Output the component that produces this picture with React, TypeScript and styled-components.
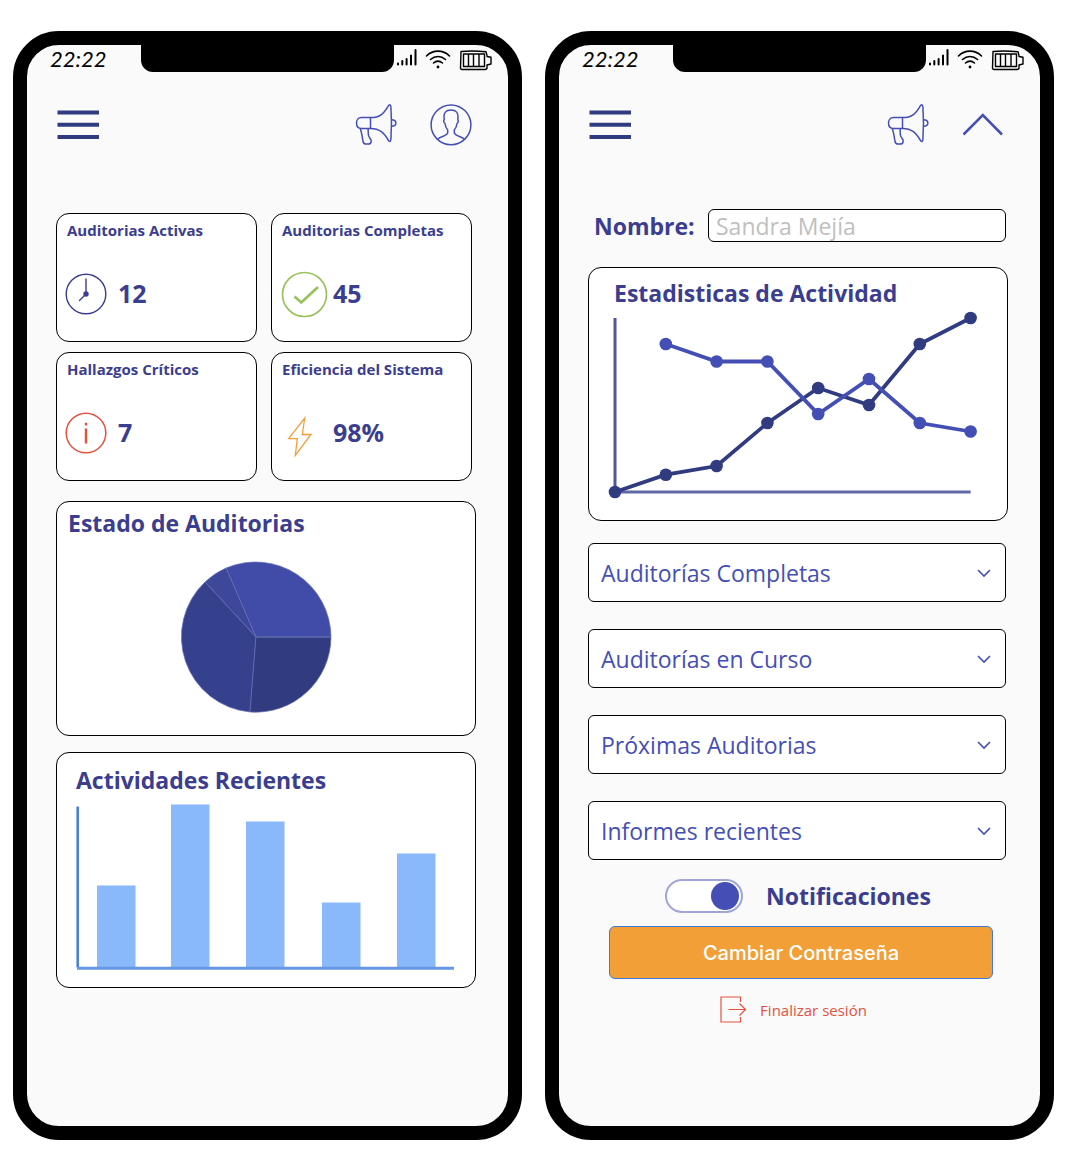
import React, { useState } from "react";
import styled, { createGlobalStyle } from "styled-components";

const color = {
  ink: "#3b3d8f",
  navy: "#313b80",
  indigo: "#444fb5",
  red: "#e25241",
  green: "#97c35c",
  orange: "#f29f38",
  screen: "#fafafa",
};

const GlobalStyle = createGlobalStyle`
  *, *::before, *::after { box-sizing: border-box; }
  body {
    margin: 0;
    background: #fff;
    font-family: "Open Sans", "Noto Sans", sans-serif;
    color: ${color.ink};
    -webkit-font-smoothing: antialiased;
  }
  svg { display: block; overflow: visible; }
`;

const Page = styled.main`
  display: grid;
  grid-template-columns: 1fr 1fr;
  gap: 23px;
  padding: 31px 18px 28px 13px;
`;

const Phone = styled.section`
  display: flex;
  flex-direction: column;
  border: 14px solid #000;
  border-radius: 46px;
  background: ${color.screen};
  padding-bottom: 103px;
`;

const StatusBar = styled.div`
  display: grid;
  grid-template-columns: 1fr 253px 1fr;
  height: 26px;
  color: #000;
`;

const Clock = styled.time`
  padding: 4px 0 0 23px;
  font: italic 400 22px/20px Lato, sans-serif;
`;

const Notch = styled.div`
  background: #000;
  border-radius: 0 0 12px 12px;
`;

const Signals = styled.div`
  display: flex;
  align-items: flex-start;
  gap: 8px;
  padding: 3px 0 0 2px;
`;

const Header = styled.header`
  display: flex;
  align-items: center;
  justify-content: space-between;
  padding: 33px 36px 0 30px;
`;

const HeaderActions = styled.div`
  display: flex;
  gap: 33px;
`;

const IconButton = styled.button`
  display: block;
  width: 42px;
  height: 42px;
  padding: 0;
  border: 0;
  background: none;
  cursor: pointer;
`;

const Content = styled.div`
  display: flex;
  flex-direction: column;
  padding: 0 32px 0 29px;
`;

const Stats = styled.div`
  display: grid;
  grid-template-columns: 1fr 1fr;
  gap: 10px 14px;
  margin: 67px 4px 20px 0;
`;

const Card = styled.article`
  border: 1px solid #000;
  border-radius: 13px;
  background: #fff;
`;

const StatCard = styled(Card)`
  height: 129px;
  padding: 6px 8px 0;
`;

const StatTitle = styled.h2`
  margin: 0 0 30px;
  padding-left: 2px;
  font-size: 15px;
  line-height: 20px;
  white-space: nowrap;
`;

const StatRow = styled.div`
  display: flex;
  align-items: center;
  height: 48px;
`;

const StatIcon = styled.span`
  flex: 0 0 53px;
`;

const StatValue = styled.strong`
  font-size: 25px;
  line-height: 32px;
  padding-bottom: 2px;
`;

const ChartTitle = styled.h2`
  margin: 0;
  font-size: 23px;
  line-height: 32px;
`;

const PieCard = styled(Card)`
  padding: 5px 11px 22px;
  margin-bottom: 16px;
`;

const PieHolder = styled.div`
  padding: 22px 0 0 112px;
`;

const BarCard = styled(Card)`
  padding: 11px 19px 16px;
`;

const BarHolder = styled.div`
  padding-top: 8px;
`;

const LineCard = styled(Card)`
  padding: 9px 25px 21px;
  margin: 25px 0 22px;
`;

const LineHolder = styled.div`
  padding-top: 2px;
`;

const NameRow = styled.div`
  display: grid;
  grid-template-columns: 114px 1fr;
  align-items: center;
  padding: 0 2px 0 6px;
  margin-top: 63px;
`;

const Label = styled.label`
  font-size: 23px;
  line-height: 32px;
  font-weight: 700;
`;

const TextInput = styled.input`
  width: 100%;
  height: 33px;
  padding: 0 7px;
  border: 1px solid #000;
  border-radius: 6px;
  background: #fff;
  font: 400 23px/30px "Open Sans", "Noto Sans", sans-serif;
  color: ${color.ink};
  &::placeholder { color: #bfbfbf; opacity: 1; }
`;

const SelectList = styled.div`
  display: grid;
  gap: 27px;
  padding-right: 2px;
`;

const SelectBox = styled.div`
  display: grid;
  align-items: center;
  > * { grid-area: 1 / 1; }
  > svg { justify-self: end; margin-right: 15px; pointer-events: none; }
`;

const Select = styled.select`
  appearance: none;
  width: 100%;
  height: 59px;
  padding: 0 40px 0 12px;
  border: 1px solid #000;
  border-radius: 6px;
  background: #fff;
  font: 400 23px/32px "Open Sans", "Noto Sans", sans-serif;
  color: ${color.indigo};
`;

const ToggleRow = styled.div`
  display: flex;
  align-items: center;
  justify-content: center;
  gap: 23px;
  margin: 19px 0 13px;
`;

const Toggle = styled.input`
  appearance: none;
  display: flex;
  align-items: center;
  justify-content: ${(p) => (p.checked ? "flex-end" : "flex-start")};
  width: 78px;
  height: 34px;
  margin: 0;
  padding: 0 2px;
  border: 2px solid #a0a5d8;
  border-radius: 17px;
  background: #fff;
  &::before {
    content: "";
    width: 28px;
    height: 28px;
    border-radius: 50%;
    background: ${color.indigo};
  }
`;

const PrimaryButton = styled.button`
  height: 53px;
  margin: 0 15px 0 21px;
  border: 1px solid #3e78d8;
  border-radius: 6px;
  background: ${color.orange};
  color: #fff;
  font: 500 20px/28px Inter, sans-serif;
  cursor: pointer;
`;

const LogoutLink = styled.a`
  display: flex;
  align-items: center;
  align-self: center;
  gap: 13px;
  margin: 17px 9px 0 0;
  font-size: 15px;
  line-height: 20px;
  color: ${color.red};
  text-decoration: none;
`;

function Status() {
  return (
    <StatusBar>
      <Clock>22:22</Clock>
      <Notch />
      <Signals>
        <svg width="21" height="19" viewBox="0 0 21 19" stroke="#000" strokeWidth="2" strokeLinecap="round">
          <path d="M2 15.5v1M6.3 13v3.500M10.600 11v5.500M15 7.500v9M19.500 2v14.500" />
        </svg>
        <svg width="26" height="21" viewBox="0 0 26 21" fill="none" stroke="#000" strokeWidth="1.600" strokeLinecap="round">
          <path d="M1.500 8C8 1.500 18 1.500 24.500 8M5.500 11.500C10 7.500 16 7.500 20.500 11.500M8.500 15C11.500 12.500 14.500 12.500 17.500 15" />
          <circle cx="13" cy="19" r="1.400" fill="#000" stroke="none" />
        </svg>
        <svg width="33" height="24" viewBox="0 0 33 24" fill="none" stroke="#000" strokeWidth="1.400" strokeLinejoin="round">
          <path d="M2 3.500Q14 2.500 27 3.800L28 7.500V8.500L32 9.300V16L28 17V20.500Q27 21.500 26 21.500H3Q1.500 21.500 1.500 20ZM4.500 6H25.500V18.500H4.500ZM9.500 6V18.500M14.500 6V18.500M20 6V18.500" />
        </svg>
      </Signals>
    </StatusBar>
  );
}

function MenuIcon() {
  return (
    <svg width="42" height="42" viewBox="0 0 42 42" fill={color.navy}>
      <path d="M.5 6.500h41.500v4H.5zM.5 18.800h41.500v4H.5zM.5 31h41.500v4H.5z" />
    </svg>
  );
}

function MegaphoneIcon() {
  return (
    <svg width="42" height="42" viewBox="0 0 42 42" fill="none" stroke={color.indigo} strokeWidth="1.500" strokeLinejoin="round">
      <path d="M15.500 13.600H6.500C3.200 13.600 1.500 16 1.500 19S3.200 24.500 6.500 24.500H15.500Z" />
      <path d="M15.500 13.600C25 13.600 29 9.500 33.500 1.700Q35.400-.5 35.900 3C36.700 14 36.700 25 35.900 35.500Q35.400 39 33.500 36.500C29 29 25 24.500 15.500 24.500" />
      <path d="M36.500 15.800C42.300 15.800 42.300 22.300 36.500 22.300" />
      <path d="M5.300 24.800C6.500 28 7.200 32 8 37.500Q8.500 40 11 40H13.500C15.500 40 16 39 16.200 37.300C16.500 34.500 13 34 13.300 30C13.400 28 12.800 26.500 13.300 24.800" />
    </svg>
  );
}

function ProfileIcon() {
  return (
    <svg width="42" height="42" viewBox="0 0 42 42" fill="none" stroke={color.indigo} strokeWidth="1.500" strokeLinejoin="round">
      <circle cx="21" cy="20.800" r="19.900" />
      <path d="M7.800 35C10 32.300 17.700 32 17.700 28.500V26C15.800 24 15.200 21.500 15 19.500C13.500 18.500 13.500 16.500 14.200 15.500C13.200 8.500 16 6 21 6S28.800 8.500 27.800 15.500C28.500 16.500 28.500 18.500 27 19.500C26.800 21.500 26.200 24 24.300 26V28.500C24.300 32 32 32.300 34.200 35" />
    </svg>
  );
}

function CollapseIcon() {
  return (
    <svg width="42" height="42" viewBox="0 0 42 42" fill="none" stroke={color.indigo} strokeWidth="2.500">
      <path d="M1.500 30.500L20.800 11L40 30.500" />
    </svg>
  );
}

function TopBar({ label, children }: { label: string; children: React.ReactNode }) {
  return (
    <Header>
      <IconButton aria-label="Menú"><MenuIcon /></IconButton>
      <HeaderActions>
        <IconButton aria-label="Avisos"><MegaphoneIcon /></IconButton>
        <IconButton aria-label={label}>{children}</IconButton>
      </HeaderActions>
    </Header>
  );
}

const clockIcon = (
  <svg width="42" height="42" viewBox="0 0 42 42" fill="none" stroke={color.ink} strokeWidth="1.400" strokeLinecap="round">
    <circle cx="21" cy="21" r="19.800" />
    <path d="M21 6V21L14.500 27.500" />
    <circle cx="21" cy="21" r="2" fill={color.ink} />
  </svg>
);

const checkIcon = (
  <svg width="48" height="48" viewBox="0 0 48 48" fill="none" stroke={color.green}>
    <circle cx="24.500" cy="24.500" r="22" strokeWidth="1.700" />
    <path d="M14.500 26.500L21.300 32.500L38 17" strokeWidth="2.700" />
  </svg>
);

const infoIcon = (
  <svg width="42" height="42" viewBox="0 0 42 42" fill="none" stroke={color.red}>
    <circle cx="21" cy="21" r="19.800" strokeWidth="1.500" />
    <path d="M21 10.800V13.500M21 16.500V31.500" strokeWidth="2.400" />
  </svg>
);

const boltIcon = (
  <svg width="42" height="42" viewBox="0 0 42 42" fill="none" stroke={color.orange} strokeWidth="1.300">
    <path d="M24.700 6L22.300 22.500H31L15.300 43.500L17.300 26.700H8.700Z" />
  </svg>
);

const stats = [
  { title: "Auditorias Activas", value: "12", icon: clockIcon },
  { title: "Auditorias Completas", value: "45", icon: checkIcon },
  { title: "Hallazgos Críticos", value: "7", icon: infoIcon },
  { title: "Eficiencia del Sistema", value: "98%", icon: boltIcon },
];

function PieChart() {
  return (
    <svg width="152" height="152" viewBox="0 0 152 152" role="img" aria-label="Estado de Auditorias" stroke="#656db3" strokeWidth=".7">
      <path d="M76 76H151A75.500 75.500 0 0 0 46 7Z" fill="#414ca8" />
      <path d="M76 76L46 7A75.500 75.500 0 0 0 25 21Z" fill="#3d489b" />
      <path d="M76 76L25 21A75.500 75.500 0 0 0 70 151Z" fill="#36418d" />
      <path d="M76 76L70 151A75.500 75.500 0 0 0 151 76Z" fill={color.navy} />
      <path d="M76 76H151" stroke="#5a63a8" strokeWidth="1.500" />
    </svg>
  );
}

const bars = [
  { x: 21, h: 82 },
  { x: 95, h: 163 },
  { x: 170, h: 146 },
  { x: 246, h: 65 },
  { x: 321, h: 114 },
];

function BarChart() {
  return (
    <svg width="378" height="167" viewBox="0 0 378 167" role="img" aria-label="Actividades Recientes">
      {bars.map((b) => (
        <rect key={b.x} x={b.x} y={163.500 - b.h} width="38.500" height={b.h} fill="#89b8fb" />
      ))}
      <path d="M1.700 2.500V163.500" stroke="#4a80dc" strokeWidth="2.600" />
      <path d="M1 164.300H378" stroke="#6597e2" strokeWidth="3" />
    </svg>
  );
}

const rising = [174, 156.700, 148, 105, 70, 87, 26, 0];
const falling = [26, 43.500, 43.500, 96, 61, 105, 113.500];
const step = 50.800;

function Series({ values, start, tone }: { values: number[]; start: number; tone: string }) {
  const points = values.map((y, i) => [(i + start) * step, y]);
  return (
    <g fill={tone}>
      <polyline points={points.map((p) => p.join(",")).join(" ")} fill="none" stroke={tone} strokeWidth="3.800" />
      {points.map(([x, y]) => (
        <circle key={x} cx={x} cy={y} r="6.300" />
      ))}
    </g>
  );
}

function LineChart() {
  return (
    <svg width="366" height="188" viewBox="-1 -7 366 188" role="img" aria-label="Estadisticas de Actividad">
      <path d="M0 0V174" stroke="#4d5799" strokeWidth="3" />
      <path d="M0 174H355.600" stroke="#6068a5" strokeWidth="3" />
      <Series values={rising} start={0} tone={color.navy} />
      <Series values={falling} start={1} tone={color.indigo} />
    </svg>
  );
}

const groups = ["Auditorías Completas", "Auditorías en Curso", "Próximas Auditorias", "Informes recientes"];

export default function App() {
  const [notify, setNotify] = useState(true);
  return (
    <>
      <GlobalStyle />
      <Page>
        <Phone>
          <Status />
          <TopBar label="Perfil"><ProfileIcon /></TopBar>
          <Content>
            <Stats>
              {stats.map((s) => (
                <StatCard key={s.title}>
                  <StatTitle>{s.title}</StatTitle>
                  <StatRow>
                    <StatIcon>{s.icon}</StatIcon>
                    <StatValue>{s.value}</StatValue>
                  </StatRow>
                </StatCard>
              ))}
            </Stats>
            <PieCard>
              <ChartTitle>Estado de Auditorias</ChartTitle>
              <PieHolder><PieChart /></PieHolder>
            </PieCard>
            <BarCard>
              <ChartTitle>Actividades Recientes</ChartTitle>
              <BarHolder><BarChart /></BarHolder>
            </BarCard>
          </Content>
        </Phone>
        <Phone>
          <Status />
          <TopBar label="Cerrar panel"><CollapseIcon /></TopBar>
          <Content>
            <NameRow>
              <Label htmlFor="nombre">Nombre:</Label>
              <TextInput id="nombre" placeholder="Sandra Mejía" />
            </NameRow>
            <LineCard>
              <ChartTitle>Estadisticas de Actividad</ChartTitle>
              <LineHolder><LineChart /></LineHolder>
            </LineCard>
            <SelectList>
              {groups.map((g) => (
                <SelectBox key={g}>
                  <Select aria-label={g}><option>{g}</option></Select>
                  <svg width="14" height="8" viewBox="0 0 14 8" fill="none" stroke={color.indigo} strokeWidth="1.600">
                    <path d="M1 1L7 7L13 1" />
                  </svg>
                </SelectBox>
              ))}
            </SelectList>
            <ToggleRow>
              <Toggle id="avisos" type="checkbox" checked={notify} onChange={(e) => setNotify(e.target.checked)} />
              <Label htmlFor="avisos">Notificaciones</Label>
            </ToggleRow>
            <PrimaryButton type="button">Cambiar Contraseña</PrimaryButton>
            <LogoutLink href="#salir">
              <svg width="27" height="27" viewBox="0 0 27 27" fill="none" stroke={color.red} strokeWidth="1.200">
                <path d="M20.500 6V1H1V26H20.500V21M8.500 13.500H25.500M19.500 7.500L25.500 13.500L19.500 19.500" />
              </svg>
              Finalizar sesión
            </LogoutLink>
          </Content>
        </Phone>
      </Page>
    </>
  );
}
